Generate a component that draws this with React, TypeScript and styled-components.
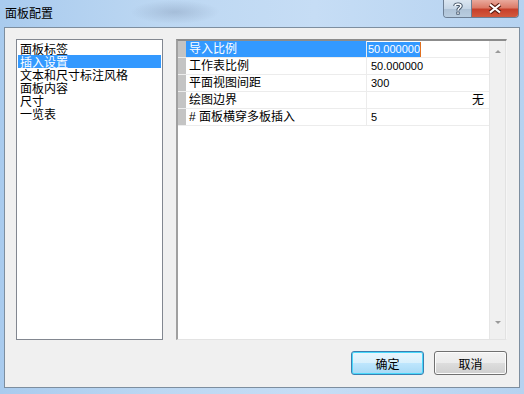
import React from 'react';
import styled, { createGlobalStyle } from 'styled-components';

const GlobalStyle = createGlobalStyle`
  html, body {
    margin: 0;
    padding: 0;
    background: #c9ddf3;
  }
  * {
    box-sizing: border-box;
  }
`;

const cjk = `"Noto Sans CJK SC", "Liberation Sans", sans-serif`;
const mixed = `"Liberation Sans", "Noto Sans CJK SC", sans-serif`;

const categories = ['面板标签', '插入设置', '文本和尺寸标注风格', '面板内容', '尺寸', '一览表'];

const properties = [
  { name: '导入比例', value: '50.000000', editing: true },
  { name: '工作表比例', value: '50.000000' },
  { name: '平面视图间距', value: '300' },
  { name: '绘图边界', value: '无', right: true },
  { name: '# 面板横穿多板插入', value: '5' },
];

export default function App() {
  return (
    <>
      <GlobalStyle />
      <Window>
        <TitleBar>
          <Title>面板配置</Title>
          <Blur />
          <Caption>
            <HelpButton>
              <svg width="10" height="13" viewBox="0 0 10 13">
                <path
                  d="M2 4 C2 1.5 8 1.5 8 4 C8 6 5 6 5 8.5"
                  fill="none"
                  stroke="#3a4a5c"
                  strokeWidth="3.4"
                />
                <path
                  d="M2 4 C2 1.5 8 1.5 8 4 C8 6 5 6 5 8.5"
                  fill="none"
                  stroke="#f4f8fc"
                  strokeWidth="1.6"
                />
                <rect x="3.4" y="9.6" width="3.2" height="3" fill="#3a4a5c" />
                <rect x="4.2" y="10.3" width="1.6" height="1.6" fill="#f4f8fc" />
              </svg>
            </HelpButton>
            <CloseButton>
              <svg width="14" height="11" viewBox="0 0 14 11">
                <path d="M2 1.5 L12 9.5 M12 1.5 L2 9.5" stroke="#5a1d12" strokeWidth="4.2" />
                <path d="M2 1.5 L12 9.5 M12 1.5 L2 9.5" stroke="#ffffff" strokeWidth="2.2" />
              </svg>
            </CloseButton>
          </Caption>
        </TitleBar>
        <Client>
          <Panes>
            <ListBox>
              {categories.map((c, i) => (
                <ListItem key={c} $selected={i === 1}>
                  {c}
                </ListItem>
              ))}
            </ListBox>
            <Grid>
              <Rows>
                {properties.map((p) => (
                  <Row key={p.name}>
                    <Gutter />
                    <NameCell $selected={!!p.editing}>{p.name}</NameCell>
                    <ValueCell $right={!!p.right}>
                      {p.editing ? <Editing>{p.value}</Editing> : p.value}
                    </ValueCell>
                  </Row>
                ))}
              </Rows>
              <ScrollBar>
                <Arrow $up />
                <Arrow />
              </ScrollBar>
            </Grid>
          </Panes>
          <Buttons>
            <Button $default>确定</Button>
            <Button>取消</Button>
          </Buttons>
        </Client>
      </Window>
    </>
  );
}

const Window = styled.div`
  position: relative;
  width: 524px;
  height: 394px;
  overflow: hidden;
  display: flex;
  flex-direction: column;
  background: linear-gradient(90deg, #a9cbee 0%, #bcd7f2 30%, #c6ddf5 60%, #b5d2f0 100%);
`;

const TitleBar = styled.div`
  position: relative;
  height: 27px;
  display: flex;
  align-items: flex-start;
  justify-content: space-between;
  padding-left: 5px;
`;

const Title = styled.div`
  margin-top: 6px;
  font-family: ${cjk};
  font-size: 12px;
  line-height: 13px;
  color: #000;
  position: relative;
  z-index: 1;
`;

const Blur = styled.div`
  position: absolute;
  left: 130px;
  top: 0;
  width: 90px;
  height: 24px;
  background: radial-gradient(ellipse at center, rgba(120, 140, 170, 0.35) 0%, rgba(160, 190, 220, 0) 70%);
`;

const Caption = styled.div`
  display: flex;
  margin-right: 5px;
  border: 1px solid #6d7f94;
  border-top: none;
  border-radius: 0 0 4px 4px;
  overflow: hidden;
  height: 18px;
`;

const HelpButton = styled.div`
  width: 28px;
  height: 17px;
  display: flex;
  align-items: center;
  justify-content: center;
  background: linear-gradient(#dbe6f1 0%, #c6d6e6 50%, #aec2d6 51%, #b9cde0 100%);
  border-right: 1px solid #6d7f94;
`;

const CloseButton = styled.div`
  width: 46px;
  height: 17px;
  display: flex;
  align-items: center;
  justify-content: center;
  background: linear-gradient(#e9a99c 0%, #dc7b68 45%, #c7402b 55%, #d35a3e 100%);
`;

const Client = styled.div`
  margin: 0 4px 0 4px;
  height: 361px;
  background: #f0f0f0;
  border: 1px solid #7d8e9f;
  display: flex;
  flex-direction: column;
  padding: 11px 12px 12px 11px;
`;

const Panes = styled.div`
  display: flex;
  gap: 13px;
  height: 301px;
`;

const ListBox = styled.div`
  width: 147px;
  height: 301px;
  background: #fff;
  border: 1px solid #828790;
  padding: 1px 1px 0 1px;
`;

const ListItem = styled.div<{ $selected?: boolean }>`
  height: 13px;
  padding-left: 2px;
  font-family: ${cjk};
  font-size: 12px;
  line-height: 13px;
  color: ${({ $selected }) => ($selected ? '#fff' : '#000')};
  background: ${({ $selected }) => ($selected ? '#3399ff' : 'transparent')};
  white-space: nowrap;
  &:first-child {
    margin-top: 1px;
  }
`;

const Grid = styled.div`
  width: 331px;
  height: 301px;
  display: flex;
  background: #fff;
  border-top: 2px solid #8c8c8c;
  border-left: 2px solid #a0a0a0;
  border-right: 1px solid #f6f6f6;
  border-bottom: 1px solid #e3e3e3;
`;

const Rows = styled.div`
  flex: 1;
  display: flex;
  flex-direction: column;
`;

const Row = styled.div`
  display: flex;
  height: 17px;
  border-bottom: 1px solid #ececec;
`;

const Gutter = styled.div`
  width: 8px;
  background: #c4c4c4;
`;

const NameCell = styled.div<{ $selected?: boolean }>`
  width: 181px;
  padding-left: 3px;
  font-family: ${mixed};
  font-size: 12px;
  line-height: 16px;
  color: ${({ $selected }) => ($selected ? '#fff' : '#000')};
  background: ${({ $selected }) => ($selected ? '#3399ff' : '#fff')};
  border-right: 1px solid #ececec;
  white-space: nowrap;
`;

const ValueCell = styled.div<{ $right?: boolean }>`
  flex: 1;
  padding: 0 5px 0 4px;
  font-family: ${mixed};
  font-size: ${({ $right }) => ($right ? '12px' : '11px')};
  line-height: 16px;
  color: #000;
  text-align: ${({ $right }) => ($right ? 'right' : 'left')};
  white-space: nowrap;
`;

const Editing = styled.span`
  display: inline-block;
  margin-left: -4px;
  padding-left: 1px;
  height: 15px;
  line-height: 15px;
  color: #fff;
  background: #3399ff;
  border-right: 1px solid #e07020;
`;

const ScrollBar = styled.div`
  width: 17px;
  display: flex;
  flex-direction: column;
  justify-content: space-between;
  align-items: center;
  padding: 9px 0 15px;
  background: #f0f0f0;
  border-left: 1px solid #e6e6e6;
  box-shadow: inset -1px 0 0 #e2e2e2;
`;

const Arrow = styled.div<{ $up?: boolean }>`
  width: 0;
  height: 0;
  border-left: 3px solid transparent;
  border-right: 3px solid transparent;
  ${({ $up }) =>
    $up ? 'border-bottom: 3px solid #9a9a9a;' : 'border-top: 3px solid #9a9a9a;'}
`;

const Buttons = styled.div`
  margin-top: auto;
  display: flex;
  justify-content: flex-end;
  gap: 10px;
`;

const Button = styled.div<{ $default?: boolean }>`
  width: 73px;
  height: 24px;
  display: flex;
  align-items: center;
  justify-content: center;
  font-family: ${cjk};
  font-size: 12px;
  color: #000;
  border-radius: 3px;
  border: 1px solid ${({ $default }) => ($default ? '#3c7fb1' : '#707070')};
  background: ${({ $default }) =>
    $default
      ? 'linear-gradient(#eaf6fd 0%, #d9f0fc 50%, #bee6fd 51%, #a7d9f5 100%)'
      : 'linear-gradient(#f2f2f2 0%, #ebebeb 50%, #dddddd 51%, #cfcfcf 100%)'};
  box-shadow: inset 0 0 0 1px ${({ $default }) => ($default ? '#48d8fb' : '#fcfcfc')};
`;
